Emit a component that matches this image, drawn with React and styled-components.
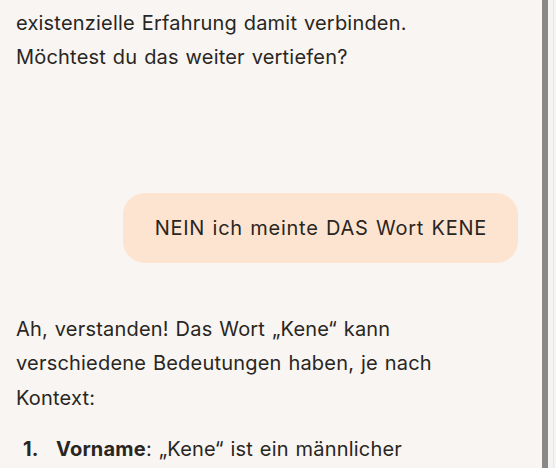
import React from 'react';
import styled, { createGlobalStyle } from 'styled-components';

const GlobalStyle = createGlobalStyle`
  html, body {
    margin: 0;
    padding: 0;
    background: #f8f5f2;
  }
  body {
    font-family: Inter, "Noto Sans", sans-serif;
    color: #29261f;
    overflow: hidden;
  }
`

const Frame = styled.div`
  display: flex;
  width: 556px;
  height: 468px;
  overflow: hidden;
`

const Chat = styled.div`
  flex: 1;
  display: flex;
  flex-direction: column;
  padding: 6px 24px 0 16px;
`

const Para = styled.p`
  margin: 0;
  max-width: 462px;
  font-size: 20px;
  letter-spacing: 0.2px;
  word-spacing: 1px;
  line-height: 34.4px;
`

const UserRow = styled.div`
  display: flex;
  justify-content: flex-end;
  margin: 118px 0 49px;
`

const Bubble = styled.div`
  background: #fde4d1;
  border-radius: 22px;
  padding: 20px 31px 20px 32px;
  font-size: 20px;
  letter-spacing: 0.75px;
  word-spacing: 1px;
  line-height: 30px;
`

const List = styled.ol`
  margin: 17px 0 0;
  padding: 0 0 0 7px;
  list-style: none;
  max-width: 455px;
`

const Item = styled.li`
  display: flex;
  font-size: 20px;
  letter-spacing: 0.2px;
  word-spacing: 1px;
  line-height: 34.4px;
`

const Num = styled.span`
  flex: none;
  width: 33px;
  font-weight: 700;
`

const Scrollbar = styled.div`
  width: 14px;
  display: flex;
  background: #f6f4f2;
`

const Thumb = styled.div`
  width: 6px;
  background: #8a8886;
`

const Track = styled.div`
  flex: 1;
  border-right: 1px solid #e8e6e4;
  margin-right: 2px;
`

export default function App() {
  return (
    <>
      <GlobalStyle />
      <Frame>
        <Chat>
          <Para>
            existenzielle Erfahrung damit verbinden. Möchtest du das weiter vertiefen?
          </Para>
          <UserRow>
            <Bubble>NEIN ich meinte DAS Wort KENE</Bubble>
          </UserRow>
          <Para>
            Ah, verstanden! Das Wort „Kene“ kann verschiedene Bedeutungen haben, je nach Kontext:
          </Para>
          <List>
            <Item>
              <Num>1.</Num>
              <span>
                <strong>Vorname</strong>: „Kene“ ist ein männlicher Vorname
              </span>
            </Item>
          </List>
        </Chat>
        <Scrollbar>
          <Thumb />
          <Track />
        </Scrollbar>
      </Frame>
    </>
  );
}
